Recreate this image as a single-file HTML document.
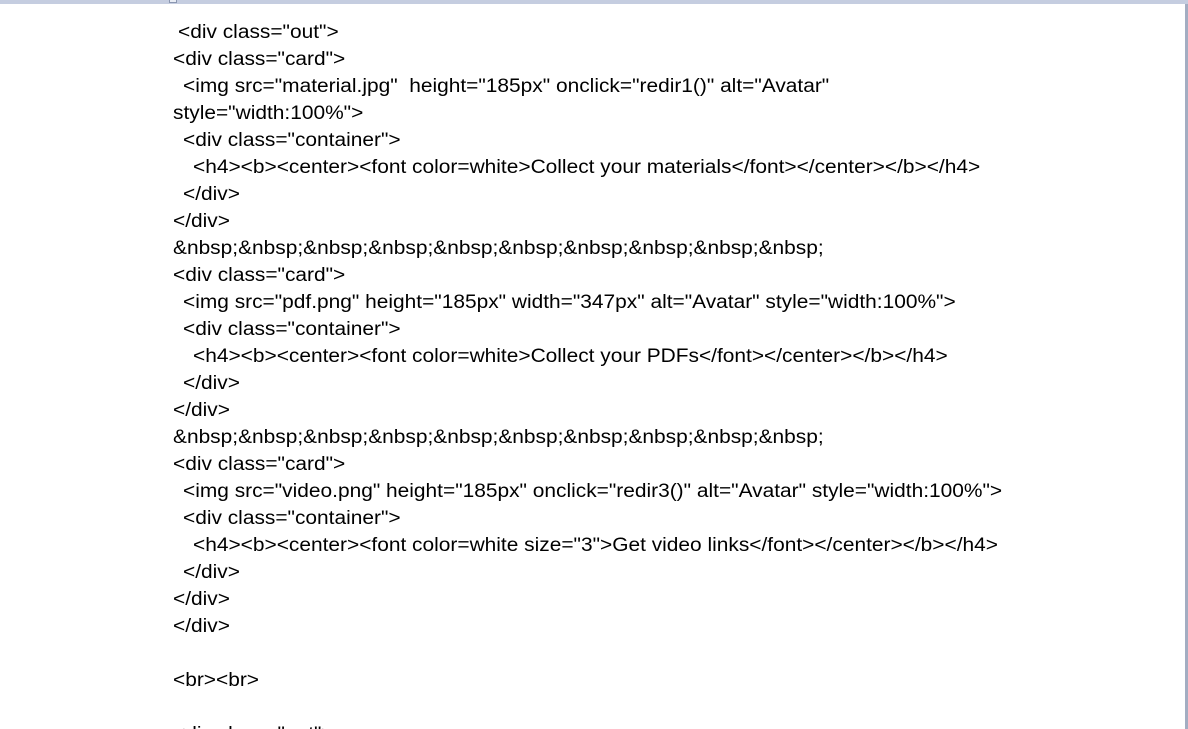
<!DOCTYPE html>
<html><head><meta charset="utf-8"><style>
html,body{margin:0;padding:0;background:#fff;width:1188px;height:729px;overflow:hidden;position:relative}
.top{position:absolute;left:0;top:0;width:1188px;height:4px;background:#c5cde0}
.mark{position:absolute;left:169px;top:0;width:6px;height:2px;border:1px solid #8a96b0;border-top:none;background:#e8ecf4}
.right{position:absolute;left:1185px;top:4px;width:3px;height:725px;background:#a3adc2}
.w{position:absolute;left:0;top:1px;width:1188px;height:729px}
.l{position:absolute;white-space:pre;font-family:"Liberation Sans",sans-serif;font-size:19px;line-height:27px;color:#000;transform:scaleX(1.10);transform-origin:0 0}
</style></head><body>
<div class="top"></div><div class="mark"></div><div class="right"></div>
<div class="w">
<div class="l" style="left:178px;top:18px">&lt;div class="out"&gt;</div>
<div class="l" style="left:173px;top:45px">&lt;div class="card"&gt;</div>
<div class="l" style="left:183px;top:72px">&lt;img src="material.jpg"  height="185px" onclick="redir1()" alt="Avatar"</div>
<div class="l" style="left:173px;top:99px">style="width:100%"&gt;</div>
<div class="l" style="left:183px;top:126px">&lt;div class="container"&gt;</div>
<div class="l" style="left:193px;top:153px">&lt;h4&gt;&lt;b&gt;&lt;center&gt;&lt;font color=white&gt;Collect your materials&lt;/font&gt;&lt;/center&gt;&lt;/b&gt;&lt;/h4&gt;</div>
<div class="l" style="left:183px;top:180px">&lt;/div&gt;</div>
<div class="l" style="left:173px;top:207px">&lt;/div&gt;</div>
<div class="l" style="left:173px;top:234px">&amp;nbsp;&amp;nbsp;&amp;nbsp;&amp;nbsp;&amp;nbsp;&amp;nbsp;&amp;nbsp;&amp;nbsp;&amp;nbsp;&amp;nbsp;</div>
<div class="l" style="left:173px;top:261px">&lt;div class="card"&gt;</div>
<div class="l" style="left:183px;top:288px">&lt;img src="pdf.png" height="185px" width="347px" alt="Avatar" style="width:100%"&gt;</div>
<div class="l" style="left:183px;top:315px">&lt;div class="container"&gt;</div>
<div class="l" style="left:193px;top:342px">&lt;h4&gt;&lt;b&gt;&lt;center&gt;&lt;font color=white&gt;Collect your PDFs&lt;/font&gt;&lt;/center&gt;&lt;/b&gt;&lt;/h4&gt;</div>
<div class="l" style="left:183px;top:369px">&lt;/div&gt;</div>
<div class="l" style="left:173px;top:396px">&lt;/div&gt;</div>
<div class="l" style="left:173px;top:423px">&amp;nbsp;&amp;nbsp;&amp;nbsp;&amp;nbsp;&amp;nbsp;&amp;nbsp;&amp;nbsp;&amp;nbsp;&amp;nbsp;&amp;nbsp;</div>
<div class="l" style="left:173px;top:450px">&lt;div class="card"&gt;</div>
<div class="l" style="left:183px;top:477px">&lt;img src="video.png" height="185px" onclick="redir3()" alt="Avatar" style="width:100%"&gt;</div>
<div class="l" style="left:183px;top:504px">&lt;div class="container"&gt;</div>
<div class="l" style="left:193px;top:531px">&lt;h4&gt;&lt;b&gt;&lt;center&gt;&lt;font color=white size="3"&gt;Get video links&lt;/font&gt;&lt;/center&gt;&lt;/b&gt;&lt;/h4&gt;</div>
<div class="l" style="left:183px;top:558px">&lt;/div&gt;</div>
<div class="l" style="left:173px;top:585px">&lt;/div&gt;</div>
<div class="l" style="left:173px;top:612px">&lt;/div&gt;</div>
<div class="l" style="left:173px;top:666px">&lt;br&gt;&lt;br&gt;</div>
<div class="l" style="left:173px;top:720px">&lt;div class="out"&gt;</div>
</div>
</body></html>
